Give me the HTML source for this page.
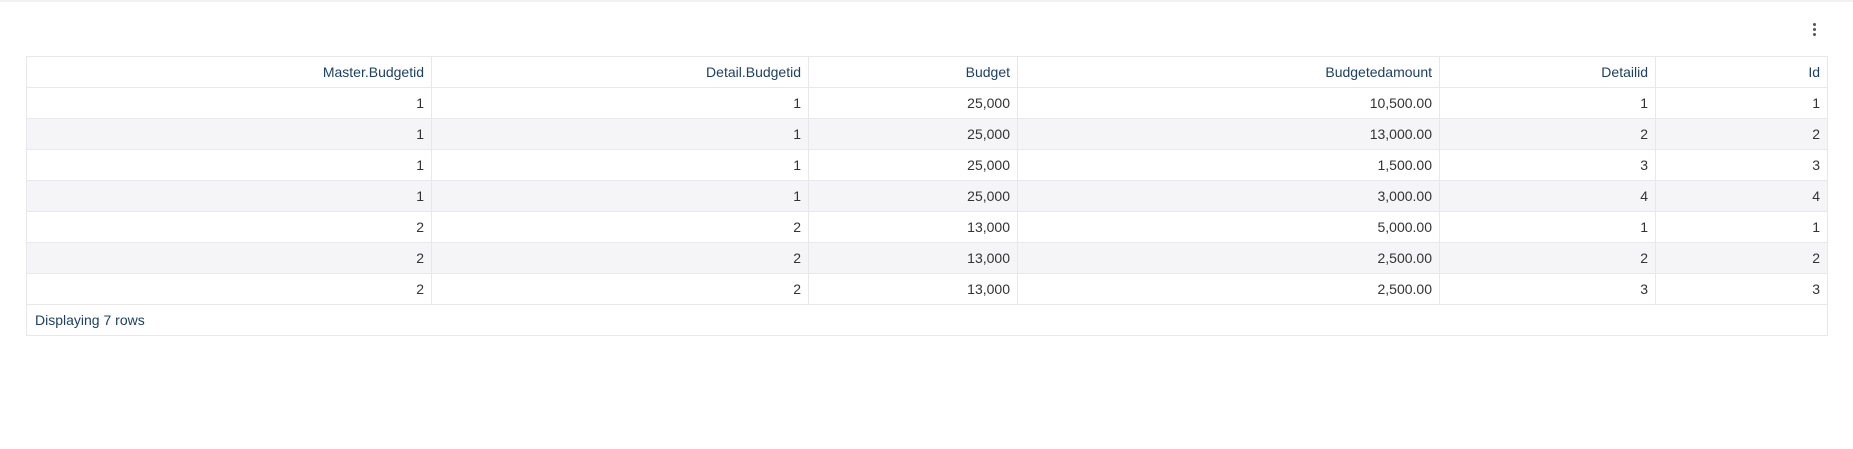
<!DOCTYPE html>
<html><head><meta charset="utf-8"><style>
body{margin:0;width:1853px;height:449px;background:#fff;font-family:"Liberation Sans",sans-serif;position:relative;overflow:hidden}
.top{position:absolute;left:0;top:0;width:1853px;height:2px;background:#f1f1f3}
.dots{position:absolute;left:1813px;top:23px;width:3px}
.dots i{display:block;width:3px;height:3px;background:#555;border-radius:50%;margin-bottom:2px}
table{position:absolute;left:26px;top:56px;border-collapse:collapse;width:1801px;table-layout:fixed;font-size:14px}
td,th{border:1px solid #e8e8ec;height:30px;padding:0 7px;text-align:right;font-weight:normal;color:#333}
th{color:#1d3f66}
tr.s td{background:#f5f5f7}
td.f{text-align:left;color:#1d3f66;padding-left:8px}
</style></head><body>
<div class="top"></div>
<div class="dots"><i></i><i></i><i></i></div>
<table>
<colgroup><col style="width:405px"><col style="width:377px"><col style="width:209px"><col style="width:422px"><col style="width:216px"><col style="width:172px"></colgroup>
<tr><th>Master.Budgetid</th><th>Detail.Budgetid</th><th>Budget</th><th>Budgetedamount</th><th>Detailid</th><th>Id</th></tr>
<tr><td>1</td><td>1</td><td>25,000</td><td>10,500.00</td><td>1</td><td>1</td></tr>
<tr class="s"><td>1</td><td>1</td><td>25,000</td><td>13,000.00</td><td>2</td><td>2</td></tr>
<tr><td>1</td><td>1</td><td>25,000</td><td>1,500.00</td><td>3</td><td>3</td></tr>
<tr class="s"><td>1</td><td>1</td><td>25,000</td><td>3,000.00</td><td>4</td><td>4</td></tr>
<tr><td>2</td><td>2</td><td>13,000</td><td>5,000.00</td><td>1</td><td>1</td></tr>
<tr class="s"><td>2</td><td>2</td><td>13,000</td><td>2,500.00</td><td>2</td><td>2</td></tr>
<tr><td>2</td><td>2</td><td>13,000</td><td>2,500.00</td><td>3</td><td>3</td></tr>
<tr><td class="f" colspan="6">Displaying 7 rows</td></tr>
</table>
</body></html>
